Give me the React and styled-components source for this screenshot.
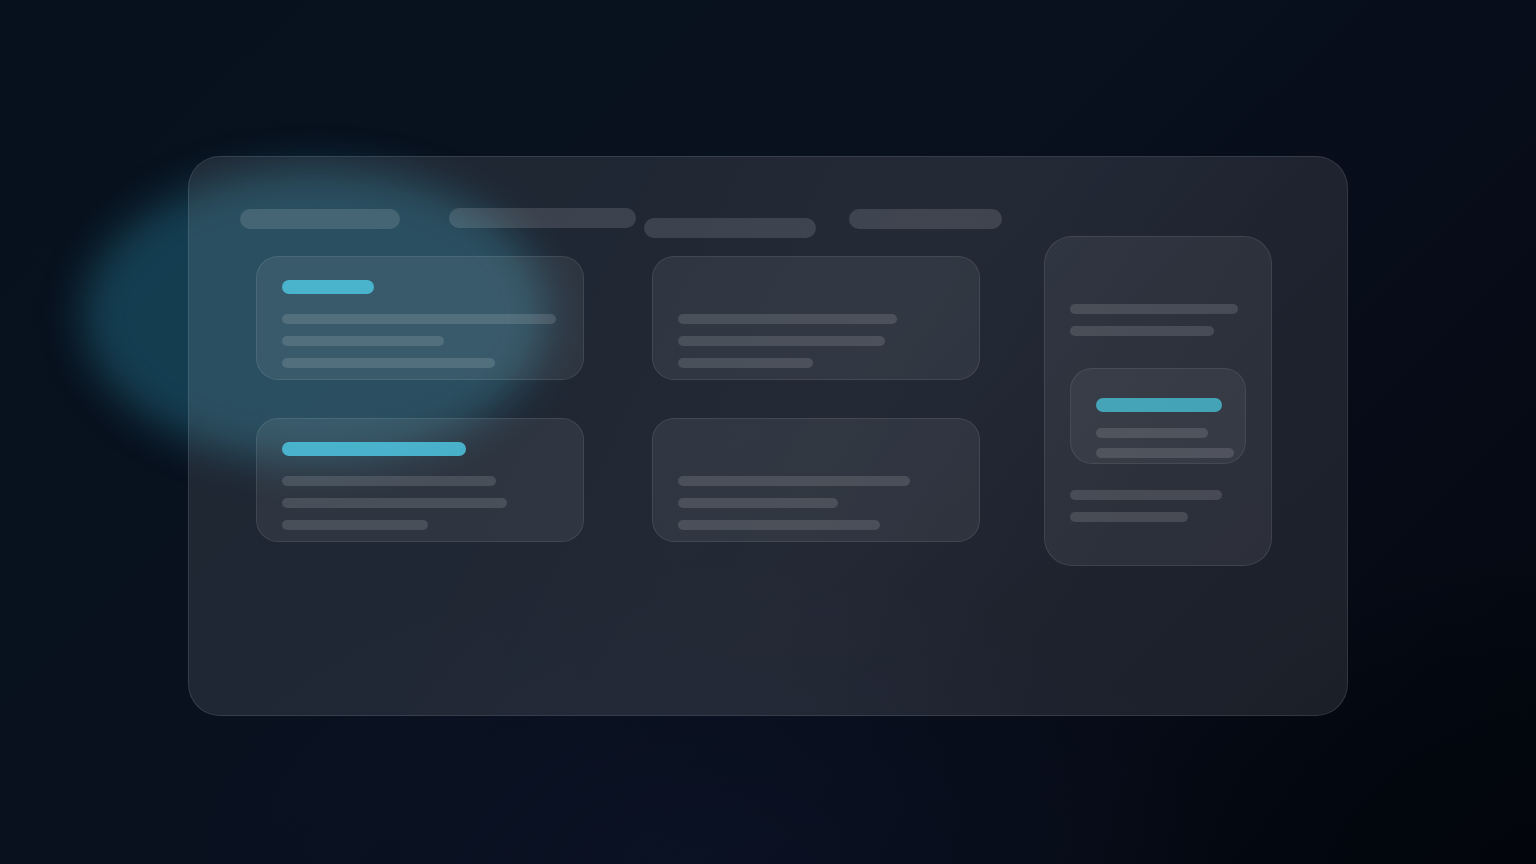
import React from "react";
import styled, { createGlobalStyle } from "styled-components";

const Global = createGlobalStyle`
  html, body { margin: 0; padding: 0; }
  body {
    background: #070e1b;
    font-family: "Inter", "Liberation Sans", sans-serif;
    overflow: hidden;
  }
`;

const Page = styled.div`
  position: relative;
  width: 1536px;
  height: 864px;
  overflow: hidden;
  background:
    radial-gradient(ellipse 600px 420px at 100% 100%, rgba(0, 2, 8, 0.6), transparent 75%),
    radial-gradient(ellipse 700px 400px at 45% 100%, rgba(14, 22, 44, 0.5), transparent 75%),
    linear-gradient(135deg, #07111d 0%, #09111f 45%, #060b17 75%, #04080f 100%);
  display: flex;
  justify-content: center;
  align-items: flex-start;
  padding-top: 156px;
  box-sizing: border-box;
`;

const Glow = styled.div`
  position: absolute;
  left: 82px;
  top: 168px;
  width: 466px;
  height: 294px;
  border-radius: 50%;
  background: rgba(50, 165, 198, 0.3);
  filter: blur(20px);
  pointer-events: none;
`;

const Panel = styled.div`
  position: relative;
  width: 1160px;
  height: 560px;
  box-sizing: border-box;
  border-radius: 32px;
  background:
    linear-gradient(115deg, rgba(255, 255, 255, 0) 30%, rgba(255, 255, 255, 0.014) 55%, rgba(255, 255, 255, 0) 80%),
    rgba(255, 255, 255, 0.093);
  border: 1px solid rgba(255, 255, 255, 0.1);
  padding: 51px 0 0 51px;
  display: flex;
  flex-direction: column;
`;

const NavRow = styled.div`
  display: flex;
  align-items: flex-start;
  height: 28px;
  flex-shrink: 0;
`;

const Pill = styled.div`
  height: 20px;
  width: ${(p) => p.$w}px;
  margin-left: ${(p) => p.$ml || 0}px;
  margin-top: ${(p) => p.$mt || 0}px;
  border-radius: 10px;
  background: rgba(255, 255, 255, 0.13);
  flex-shrink: 0;
`;

const Main = styled.div`
  display: flex;
  align-items: flex-start;
  padding-left: 16px;
  gap: 64px;
`;

const CardGrid = styled.div`
  display: grid;
  grid-template-columns: 328px 328px;
  column-gap: 68px;
  row-gap: 38px;
  padding-top: 20px;
`;

const Card = styled.div`
  box-sizing: border-box;
  height: 124px;
  border-radius: 22px;
  background: rgba(255, 255, 255, 0.065);
  border: 1px solid rgba(255, 255, 255, 0.09);
  padding: 23px 25px 0;
  display: flex;
  flex-direction: column;
`;

const Accent = styled.div`
  flex-shrink: 0;
  height: 14px;
  width: ${(p) => p.$w}px;
  border-radius: 7px;
  background: ${(p) =>
    p.$hidden ? "transparent" : p.$dim ? "rgba(72, 182, 204, 0.85)" : "rgba(76, 190, 216, 0.9)"};
  margin-bottom: ${(p) => p.$mb ?? 20}px;
`;

const Line = styled.div`
  flex-shrink: 0;
  height: 10px;
  width: ${(p) => p.$w}px;
  border-radius: 5px;
  background: rgba(255, 255, 255, 0.13);
  margin-top: ${(p) => p.$mt ?? 12}px;
`;

const Lines = styled.div`
  display: flex;
  flex-direction: column;
  flex-shrink: 0;
`;

const SideCard = styled.div`
  box-sizing: border-box;
  width: 228px;
  height: 330px;
  border-radius: 28px;
  background: rgba(255, 255, 255, 0.065);
  border: 1px solid rgba(255, 255, 255, 0.09);
  padding: 67px 25px 0;
  display: flex;
  flex-direction: column;
`;

const InnerCard = styled.div`
  box-sizing: border-box;
  flex-shrink: 0;
  width: 176px;
  height: 96px;
  margin: 32px 0 26px;
  border-radius: 22px;
  background: rgba(255, 255, 255, 0.05);
  border: 1px solid rgba(255, 255, 255, 0.08);
  padding: 29px 25px 0;
  display: flex;
  flex-direction: column;
`;

const cards = [
  { accent: 92, lines: [274, 162, 213] },
  { accent: 0, lines: [219, 207, 135] },
  { accent: 184, lines: [214, 225, 146] },
  { accent: 0, lines: [232, 160, 202] },
];

export default function App() {
  return (
    <>
      <Global />
      <Page>
        <Glow />
        <Panel>
          <NavRow>
            <Pill $w={160} $mt={1} />
            <Pill $w={187} $ml={49} />
            <Pill $w={172} $ml={8} $mt={10} />
            <Pill $w={153} $ml={33} $mt={1} />
          </NavRow>
          <Main>
            <CardGrid>
              {cards.map((c, i) => (
                <Card key={i}>
                  <Accent $w={c.accent || 100} $hidden={!c.accent} />
                  <Lines>
                    {c.lines.map((w, j) => (
                      <Line key={j} $w={w} $mt={j === 0 ? 0 : 12} />
                    ))}
                  </Lines>
                </Card>
              ))}
            </CardGrid>
            <SideCard>
              <Lines>
                <Line $w={168} $mt={0} />
                <Line $w={144} $mt={12} />
              </Lines>
              <InnerCard>
                <Accent $w={126} $mb={16} $dim />
                <Lines>
                  <Line $w={112} $mt={0} />
                  <Line $w={138} $mt={10} />
                </Lines>
              </InnerCard>
              <Lines>
                <Line $w={152} $mt={0} />
                <Line $w={118} $mt={12} />
              </Lines>
            </SideCard>
          </Main>
        </Panel>
      </Page>
    </>
  );
}
